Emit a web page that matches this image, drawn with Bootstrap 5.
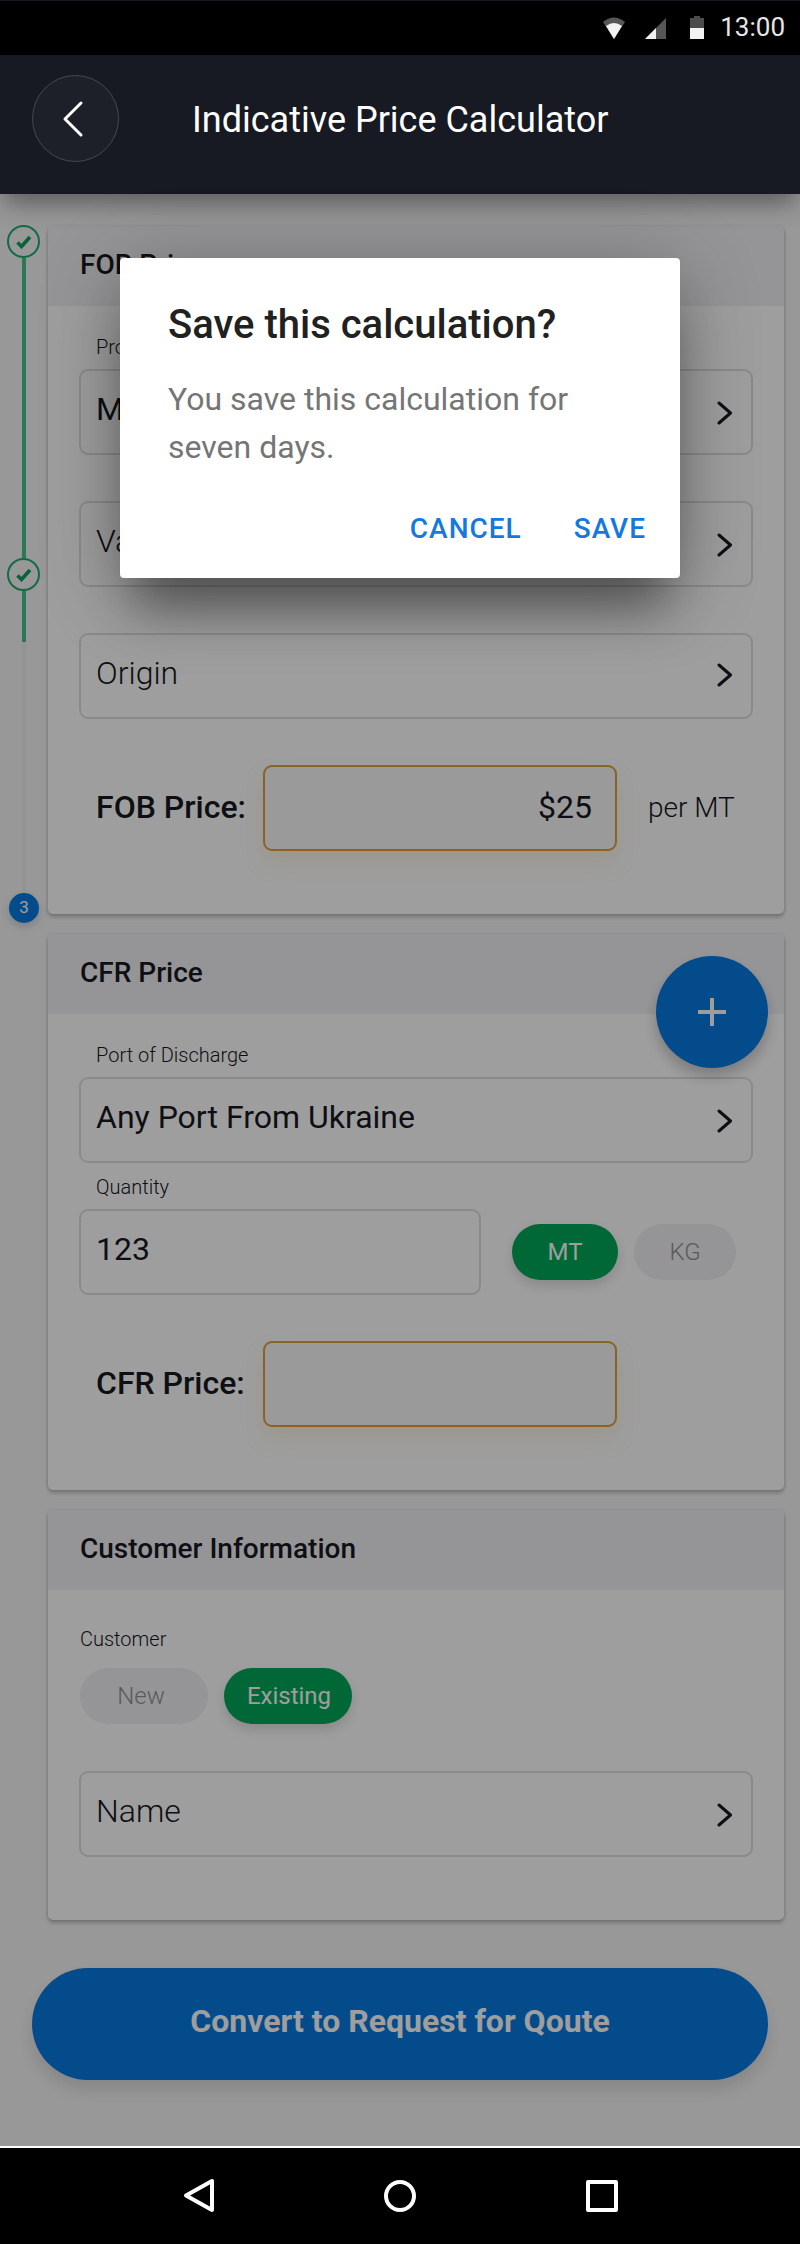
<!DOCTYPE html>
<html lang="en">
<head>
<meta charset="utf-8">
<meta name="viewport" content="width=device-width, initial-scale=1">
<title>Indicative Price Calculator</title>
<link href="https://cdn.jsdelivr.net/npm/bootstrap@5.3.0/dist/css/bootstrap.min.css" rel="stylesheet">
<style>
  body { font-family: Roboto, sans-serif; color: #171923; background: #f5f5f5; }
  .screen { width: 800px; height: 2244px; }
  .status-bar { height: 55px; background: #000; border-top: 1px solid #171923; padding-right: 15px; color: #e6e6e6; font-size: 26px; line-height: 54px; }
  .status-bar span { margin-top: -2px; }
  .app-bar { height: 139px; background: #171923; padding: 0 32px; box-shadow: 0 12px 24px -4px rgba(0,0,0,.42); z-index: 3; }
  .back { width: 87px; height: 87px; margin-top: -12px; border: 1.5px solid #454751; background: #1e2029; }
  .back svg { margin-left: -5px; }
  .app-title { font-size: 36px; line-height: 44px; color: #fff; margin: -9px 0 0 73px; }
  .content { height: 1952px; padding: 32px 16px 0 0; background: #f6f6f6; }
  .stepper { width: 48px; padding-top: 0; }
  .step { width: 33px; height: 33px; border: 2px solid #1cae70; margin-left: 7px; }
  .step-now { width: 30px; height: 30px; margin-left: 9px; background: #0879e2; color: #fff; font-size: 17px; box-shadow: 0 4px 10px rgba(8,60,120,.2); }
  .rail { width: 4px; margin-left: 22px; background: #48c18d; }
  .rail-off { width: 4px; margin-left: 22px; background: #efeff0; }
  .panel { border: 0; border-radius: 5px; box-shadow: 0 3px 4px rgba(0,0,0,.24), 0 0 3px rgba(0,0,0,.12); }
  .panel-head { height: 80px; padding: 0 32px 0 32px; background: #f1f1f4; border-radius: 5px 5px 0 0; font-size: 28px; font-weight: 500; line-height: 78px; }
  .panel-main { padding: 29px 31px 63px; }
  .cap { font-size: 20px; line-height: 24px; font-weight: 300; margin: 0 0 10px 17px; }
  .field { height: 86px; border: 2px solid #dfdfe1; border-radius: 9px; padding: 0 18px 6px 15px; font-size: 32px; }
  .field svg { margin-top: 8px; }
  .hint { font-weight: 300; }
  .gap-f { margin-top: 46px; }
  .result { width: 354px; height: 86px; border: 2px solid #dca03c; border-radius: 9px; background: #f8f8fb; padding: 0 23px 2px; font-size: 32px; box-shadow: 0 12px 24px rgba(220,160,60,.13); }
  .result-label { width: 167px; margin-left: 17px; padding-bottom: 2px; font-size: 32px; font-weight: 500; }
  .unit { margin-left: 31px; font-size: 28px; font-weight: 300; }
  .pill { height: 56px; font-size: 24px; line-height: 56px; background: #f0f0f4; color: #909095; font-weight: 300; }
  .pill-on { background: #00a957; color: #fff; font-weight: 400; box-shadow: 0 6px 12px rgba(0,0,0,.13); }
  .fab { right: 32px; top: 762px; width: 112px; height: 112px; background: #0879e2; box-shadow: 0 8px 14px rgba(0,0,0,.22); }
  .convert { width: 736px; height: 112px; margin: 48px 0 0 32px; padding-bottom: 7px; background: #0879e2; color: #fff; font-size: 32px; font-weight: 700; box-shadow: 0 10px 18px rgba(0,0,0,.12); }
  .scrim { background: rgba(0,0,0,.38); z-index: 2; }
  .dialog-box { left: 120px; top: 258px; width: 560px; height: 320px; border-radius: 4px; background: #fff; z-index: 4; padding: 43px 34px 0 48px; box-shadow: 0 44px 44px -14px rgba(0,0,0,.34), 0 14px 80px 0 rgba(0,0,0,.3); }
  .dialog-box h2 { font-size: 40px; line-height: 48px; font-weight: 500; color: #212121; margin: 0 0 26px; }
  .dialog-box p { font-size: 32px; line-height: 48px; color: #757575; margin: 0 0 41px; }
  .act { font-size: 28px; line-height: 34px; font-weight: 500; letter-spacing: 1px; color: #1479de; }
  .nav-keys { height: 98px; background: #000; border-top: 2px solid #fff; padding-right: 180px; padding-left: 182px; }
</style>
</head>
<body>
<div class="screen position-relative overflow-hidden">
  <div class="status-bar d-flex justify-content-end align-items-center">
    <svg width="104" height="24" viewBox="0 0 104 24" style="margin-right:14px">
      <path d="M1 6Q12-3 23 6L12 23Z" fill="#565656"/><path d="M4 10Q12 4 20 10L12 23Z" fill="#f2f2f2"/>
      <path d="M43 23 64 2V23Z" fill="#565656"/><path d="M43 23 54 12V23Z" fill="#f2f2f2"/>
      <path d="M88 2h4V0h6v2h4v11H88Z" fill="#4c4c4c"/><path d="M88 12h14v11H88Z" fill="#f2f2f2"/>
    </svg>
    <span>13:00</span>
  </div>
  <header class="app-bar d-flex align-items-center position-relative">
    <div class="back rounded-circle d-flex align-items-center justify-content-center">
      <svg width="24" height="38" viewBox="0 0 24 38" fill="none" stroke="#fff" stroke-width="3" stroke-linecap="round" stroke-linejoin="round"><path d="M20 3 4 19 20 35"/></svg>
    </div>
    <div class="app-title">Indicative Price Calculator</div>
  </header>

  <main class="content position-relative">
    <div class="d-flex">
      <div class="stepper d-flex flex-column">
        <div class="step rounded-circle d-flex align-items-center justify-content-center" style="margin-top:-1px"><svg width="16" height="14" viewBox="0 0 16 14" fill="none" stroke="#0f9f5c" stroke-width="3.6"><path d="M1.5 7.5 5.5 11.5 14 2"/></svg></div>
        <div class="rail" style="height:300px"></div>
        <div class="step rounded-circle d-flex align-items-center justify-content-center"><svg width="16" height="14" viewBox="0 0 16 14" fill="none" stroke="#0f9f5c" stroke-width="3.6"><path d="M1.5 7.5 5.5 11.5 14 2"/></svg></div>
        <div class="rail" style="height:51px"></div>
        <div class="rail-off" style="height:251px"></div>
        <div class="step-now rounded-circle d-flex align-items-center justify-content-center">3</div>
      </div>

      <div class="flex-fill d-flex flex-column" style="gap:20px">
        <section class="card panel">
          <div class="panel-head">FOB Price</div>
          <div class="panel-main">
            <div class="cap">Product</div>
            <div class="field d-flex align-items-center justify-content-between">Maize<svg width="16" height="24" viewBox="0 0 16 24" fill="none" stroke="#171923" stroke-width="3" stroke-linecap="round" stroke-linejoin="round"><path d="M2 2 13.5 12 2 22"/></svg></div>
            <div class="field gap-f hint d-flex align-items-center justify-content-between">Variety<svg width="16" height="24" viewBox="0 0 16 24" fill="none" stroke="#171923" stroke-width="3" stroke-linecap="round" stroke-linejoin="round"><path d="M2 2 13.5 12 2 22"/></svg></div>
            <div class="field gap-f hint d-flex align-items-center justify-content-between">Origin<svg style="margin-top:4px" width="16" height="24" viewBox="0 0 16 24" fill="none" stroke="#171923" stroke-width="3" stroke-linecap="round" stroke-linejoin="round"><path d="M2 2 13.5 12 2 22"/></svg></div>
            <div class="gap-f d-flex align-items-center">
              <div class="result-label">FOB Price:</div>
              <div class="result d-flex align-items-center justify-content-end">$25</div>
              <div class="unit">per MT</div>
            </div>
          </div>
        </section>

        <section class="card panel">
          <div class="panel-head">CFR Price</div>
          <div class="panel-main">
            <div class="cap">Port of Discharge</div>
            <div class="field d-flex align-items-center justify-content-between">Any Port From Ukraine<svg width="16" height="24" viewBox="0 0 16 24" fill="none" stroke="#171923" stroke-width="3" stroke-linecap="round" stroke-linejoin="round"><path d="M2 2 13.5 12 2 22"/></svg></div>
            <div class="cap" style="margin-top:12px">Quantity</div>
            <div class="d-flex align-items-center">
              <div class="field d-flex align-items-center" style="width:402px">123</div>
              <div class="pill pill-on rounded-pill text-center" style="width:106px;margin-left:31px">MT</div>
              <div class="pill rounded-pill text-center" style="width:102px;margin-left:16px">KG</div>
            </div>
            <div class="gap-f d-flex align-items-center">
              <div class="result-label">CFR Price:</div>
              <div class="result"></div>
            </div>
          </div>
        </section>

        <section class="card panel">
          <div class="panel-head">Customer Information</div>
          <div class="panel-main" style="padding-top:37px">
            <div class="cap" style="margin:0 0 17px 1px">Customer</div>
            <div class="d-flex gap-3">
              <div class="pill rounded-pill text-center" style="width:128px;margin-left:1px;padding-right:6px">New</div>
              <div class="pill pill-on rounded-pill text-center" style="width:128px;padding-left:2px">Existing</div>
            </div>
            <div class="field hint d-flex align-items-center justify-content-between" style="margin-top:47px">Name<svg width="16" height="24" viewBox="0 0 16 24" fill="none" stroke="#171923" stroke-width="3" stroke-linecap="round" stroke-linejoin="round"><path d="M2 2 13.5 12 2 22"/></svg></div>
          </div>
        </section>
      </div>
    </div>

    <div class="convert rounded-pill d-flex align-items-center justify-content-center">Convert to Request for Qoute</div>
    <div class="fab position-absolute rounded-circle d-flex align-items-center justify-content-center">
      <svg width="28" height="28" viewBox="0 0 28 28" stroke="#fff" stroke-width="4"><path d="M14 0V28M0 14H28"/></svg>
    </div>
    <div class="scrim position-absolute top-0 start-0 w-100 h-100"></div>
  </main>

  <div class="nav-keys d-flex align-items-center justify-content-between">
    <svg width="36" height="36" viewBox="0 0 36 36" fill="none" stroke="#fff" stroke-width="4" stroke-linejoin="round"><path d="M30 3V32L4 17.5Z"/></svg>
    <svg width="36" height="36" viewBox="0 0 36 36" fill="none" stroke="#fff" stroke-width="4"><circle cx="17" cy="18" r="14"/></svg>
    <svg width="36" height="36" viewBox="0 0 36 36" fill="none" stroke="#fff" stroke-width="4" stroke-linejoin="round"><path d="M4 4H32V32H4Z"/></svg>
  </div>

  <div class="dialog-box position-absolute" role="dialog">
    <h2>Save this calculation?</h2>
    <p>You save this calculation for seven days.</p>
    <div class="d-flex justify-content-end" style="gap:52px"><span class="act">CANCEL</span><span class="act">SAVE</span></div>
  </div>
</div>
<script src="https://cdn.jsdelivr.net/npm/bootstrap@5.3.0/dist/js/bootstrap.bundle.min.js"></script>
</body>
</html>
